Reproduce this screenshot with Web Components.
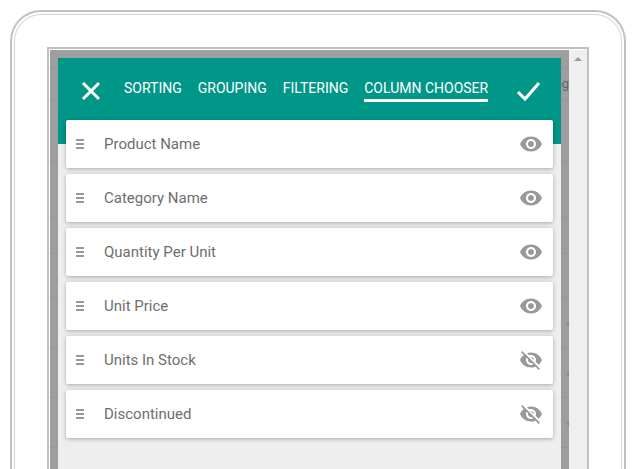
<!DOCTYPE html>
<html lang="en">
<head>
<meta charset="utf-8">
<title>Column Chooser</title>
<style>
	html, body {
		height: 100%;
		margin: 0;
	}
	body {
		display: flex;
		overflow: hidden;
		background: #fff;
		font-family: Roboto, sans-serif;
	}
</style>
</head>
<body>

<tablet-frame>
	<grid-backdrop slot="backdrop"></grid-backdrop>
	<column-dialog>
		<column-card name="Product Name" shown></column-card>
		<column-card name="Category Name" shown></column-card>
		<column-card name="Quantity Per Unit" shown></column-card>
		<column-card name="Unit Price" shown></column-card>
		<column-card name="Units In Stock"></column-card>
		<column-card name="Discontinued"></column-card>
	</column-dialog>
</tablet-frame>

<script>
// ================================= //
//          TABLET FRAME             //
// ================================= //

class TabletFrame extends HTMLElement {

	connectedCallback() {
		const SHADOW = this.attachShadow({mode: 'open'});
		SHADOW.innerHTML = this.getInnerHTML();
	}
	getInnerHTML() {
		return `
		<style>
			:host {
				display: flex;
				flex: 1;
				box-sizing: border-box;
				margin: 10px 10px 0;
				padding: 2px 2px 0;
				border: 2px solid #c2c2c2;
				border-bottom: 0;
				border-radius: 31px 31px 0 0;
			}
			.bezel {
				display: flex;
				flex: 1;
				padding: 32px 32px 0;
				border: 1px solid #d4d4d4;
				border-bottom: 0;
				border-radius: 27px 27px 0 0;
			}
			.screen {
				display: flex;
				flex: 1;
				padding: 1px 0 0 1px;
				border: 2px solid #c0c0c0;
				border-bottom: 0;
			}
			.view {
				position: relative;
				display: flex;
				flex: 1;
				box-sizing: border-box;
				padding: 8px 8px 0;
				background: #9e9e9e;
			}
			.scrollbar {
				flex: 0 0 18px;
				background: #efefef;
			}
			.scrollbar svg {
				display: block;
				margin: 6px auto 0 5px;
			}
		</style>

		<div class="bezel">
			<div class="screen">
				<div class="view">
					<slot name="backdrop"></slot>
					<slot></slot>
				</div>
				<div class="scrollbar">
					<svg width="8" height="6" viewBox="0 0 8 6"><path d="M0 5L4 1l4 4z" fill="#9a9a9a"/></svg>
				</div>
			</div>
		</div>
		`}
}

// ================================= //
//          GRID BACKDROP            //
// ================================= //

// The dimmed product grid that lies under the dialog
class GridBackdrop extends HTMLElement {

	connectedCallback() {
		const SHADOW = this.attachShadow({mode: 'open'});
		SHADOW.innerHTML = this.getInnerHTML();
		let heights = [62, 56, 36, 44, 50, 50, 50];
		for (let height of heights) {
			let row = document.createElement('div');
			row.className = height === 50 ? 'row item' : 'row';
			row.style.height = `${height}px`;
			SHADOW.append(row);
		}
	}
	getInnerHTML() {
		return `
		<style>
			:host {
				position: absolute;
				inset: 0;
				overflow: hidden;
				padding-top: 18px;
				color: #666;
				font-size: 13px;
			}
			.header, .row {
				box-sizing: border-box;
				border-bottom: 1px solid #979797;
			}
			.header {
				height: 32px;
				border-top: 1px solid #979797;
				line-height: 30px;
				text-align: right;
			}
			.item {
				background: radial-gradient(circle at 100% 52%, #868686 1px, transparent 3px);
			}
		</style>

		<div class="header">og</div>
		`}
}

// ================================= //
//          COLUMN DIALOG            //
// ================================= //

class ColumnDialog extends HTMLElement {

	connectedCallback() {
		const SHADOW = this.attachShadow({mode: 'open'});
		SHADOW.innerHTML = this.getInnerHTML();
	}
	getInnerHTML() {
		return `
		<style>
			:host {
				position: relative;
				flex: 1;
				min-width: 0;
				background: linear-gradient(#009688 86px, #eee 86px);
			}
			header {
				display: flex;
				align-items: center;
				height: 62px;
				padding: 4px 20px 0 20px;
				box-sizing: border-box;
				color: #fff;
			}
			button {
				flex: none;
				width: 26px;
				height: 26px;
				padding: 0;
				border: 0;
				background: none;
			}
			svg {
				display: block;
				fill: none;
				stroke: #fff;
				stroke-width: 3;
			}
			nav {
				display: flex;
				flex: 1;
				gap: 16px;
				margin-left: 20px;
				padding-bottom: 2px;
			}
			a {
				padding-bottom: 2px;
				border-bottom: 3px solid transparent;
				color: #fff;
				font-size: 14px;
				line-height: 18px;
				text-decoration: none;
				white-space: nowrap;
			}
			a[aria-current] {
				border-color: #fff;
			}
			main {
				display: grid;
				gap: 6px;
				padding: 0 8px;
			}
		</style>

		<header>
			<button aria-label="Close">
				<svg width="26" height="26" viewBox="0 0 26 26"><path d="M5 5l16 16M21 5L5 21"/></svg>
			</button>
			<nav>
				<a href="#sorting">SORTING</a>
				<a href="#grouping">GROUPING</a>
				<a href="#filtering">FILTERING</a>
				<a href="#columns" aria-current="page">COLUMN CHOOSER</a>
			</nav>
			<button aria-label="Apply">
				<svg width="26" height="26" viewBox="0 0 26 26"><path d="M3 14l7 7L24 5"/></svg>
			</button>
		</header>
		<main><slot></slot></main>
		`}
}

// ================================= //
//           COLUMN CARD             //
// ================================= //

const EYE = 'M12 4.5C7 4.5 2.73 7.61 1 12c1.73 4.39 6 7.5 11 7.5s9.27-3.11 11-7.5c-1.73-4.39-6-7.5-11-7.5zM12 17c-2.76 0-5-2.24-5-5s2.24-5 5-5 5 2.24 5 5-2.24 5-5 5zm0-8c-1.66 0-3 1.34-3 3s1.34 3 3 3 3-1.34 3-3-1.34-3-3-3z';
const EYE_OFF = 'M12 7c2.76 0 5 2.24 5 5 0 .65-.13 1.26-.36 1.83l2.92 2.92c1.51-1.26 2.7-2.89 3.43-4.75-1.73-4.39-6-7.5-11-7.5-1.4 0-2.74.25-3.98.7l2.16 2.16C10.74 7.13 11.35 7 12 7zM2 4.27l2.28 2.28.46.46C3.08 8.3 1.78 10.02 1 12c1.73 4.39 6 7.5 11 7.5 1.55 0 3.03-.3 4.38-.84l.42.42L19.73 22 21 20.73 3.27 3 2 4.27zM7.53 9.8l1.55 1.55c-.05.21-.08.43-.08.65 0 1.66 1.34 3 3 3 .22 0 .44-.03.65-.08l1.55 1.55c-.67.33-1.41.53-2.2.53-2.76 0-5-2.24-5-5 0-.79.2-1.53.53-2.2zm4.31-.78l3.15 3.15.02-.16c0-1.66-1.34-3-3-3l-.17.01z';

class ColumnCard extends HTMLElement {

	connectedCallback() {
		const SHADOW = this.attachShadow({mode: 'open'});
		SHADOW.innerHTML = this.getInnerHTML();
	}
	getInnerHTML() {
		let shown = this.hasAttribute('shown');
		return `
		<style>
			:host {
				display: flex;
				align-items: center;
				height: 48px;
				padding: 0 10px;
				box-sizing: border-box;
				border-radius: 2px;
				background: #fff;
				box-shadow: 0 1px 4px rgba(0, 0, 0, 0.3);
				color: #6e6e6e;
				font-size: 15px;
			}
			.handle {
				margin-right: 20px;
			}
			.name {
				flex: 1;
			}
			button {
				padding: 0;
				border: 0;
				background: none;
			}
			svg {
				display: block;
				fill: #999;
			}
		</style>

		<svg class="handle" width="8" height="10" viewBox="0 0 8 10"><path d="M0 0h8v2H0zM0 4h8v2H0zM0 8h8v2H0z"/></svg>
		<span class="name">${this.getAttribute('name')}</span>
		<button aria-label="${shown ? 'Hide' : 'Show'} column" aria-pressed="${shown}">
			<svg width="24" height="24" viewBox="0 0 24 24"><path d="${shown ? EYE : EYE_OFF}"/></svg>
		</button>
		`}
}

window.customElements.define('tablet-frame', TabletFrame);
window.customElements.define('grid-backdrop', GridBackdrop);
window.customElements.define('column-dialog', ColumnDialog);
window.customElements.define('column-card', ColumnCard);
</script>
</body>
</html>
